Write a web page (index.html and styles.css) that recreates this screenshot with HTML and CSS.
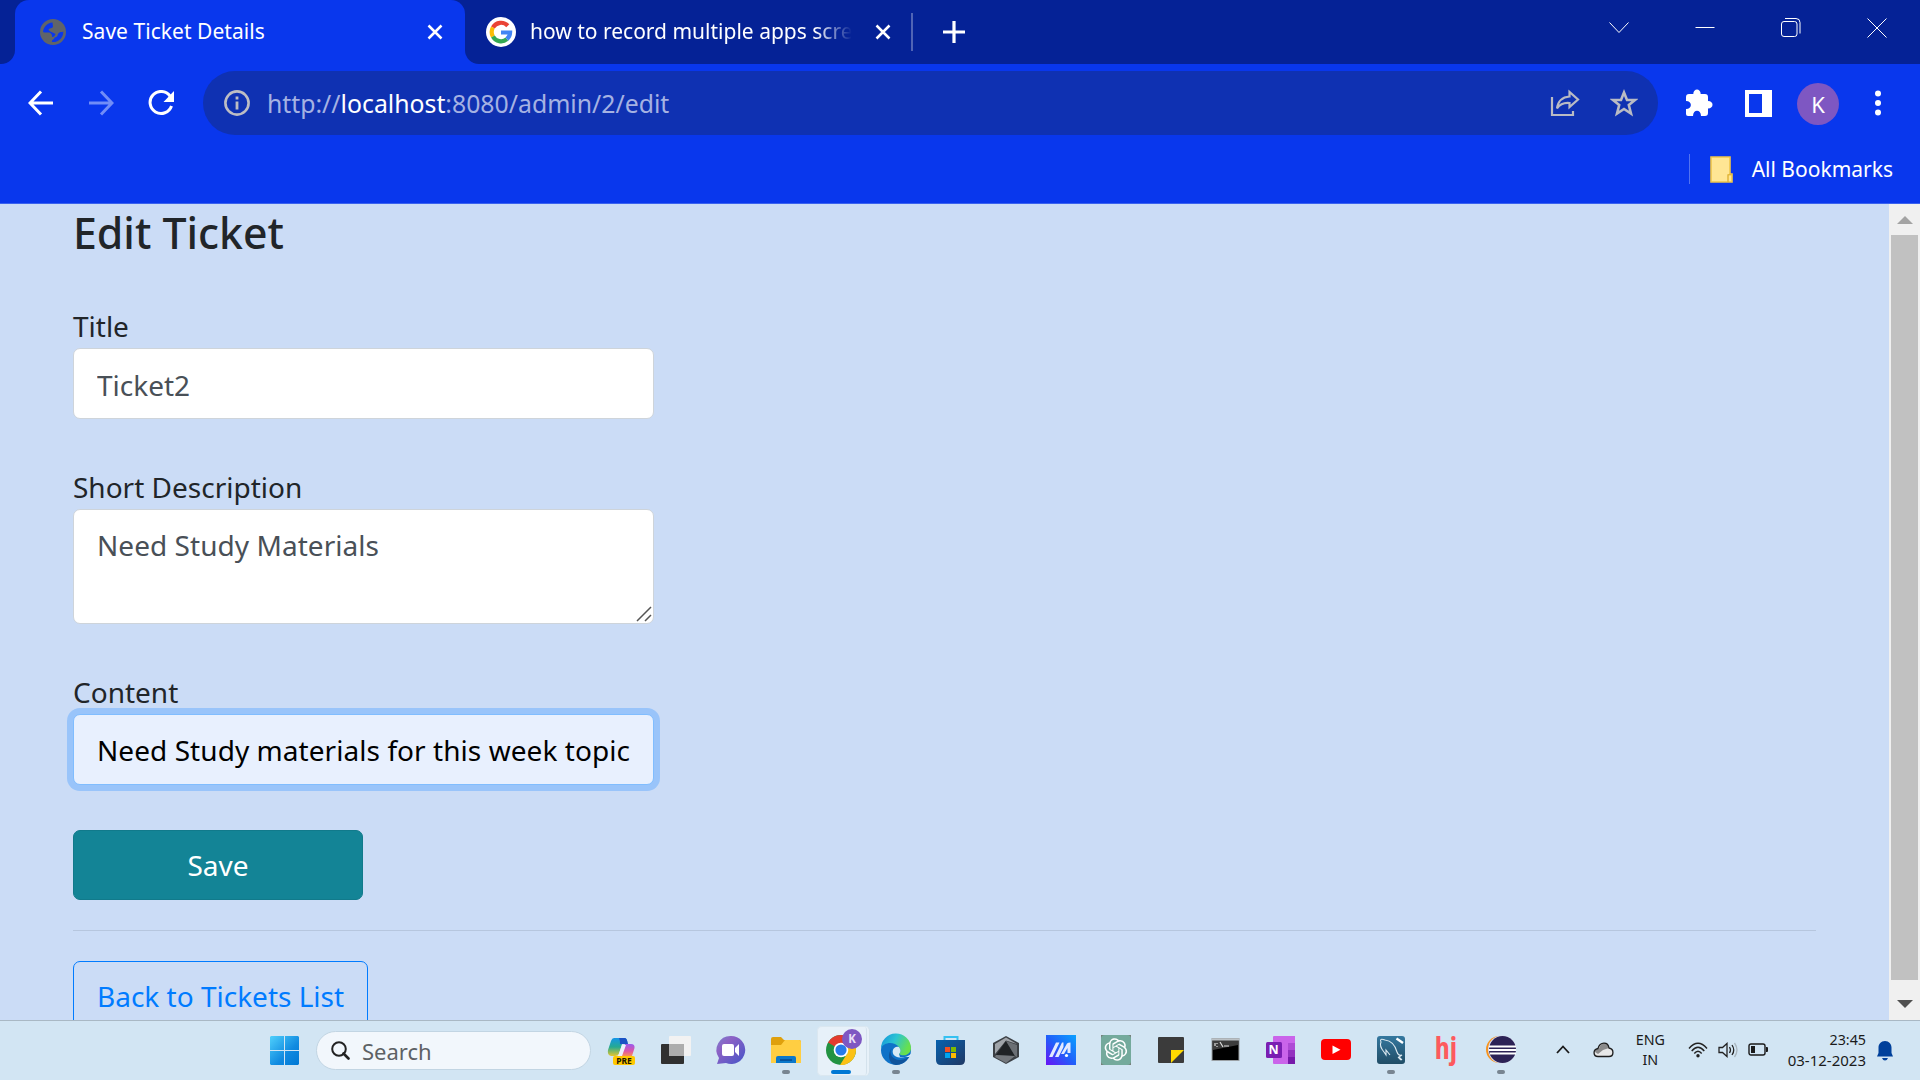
FILE: index.html
```html
<!DOCTYPE html>
<html lang="en">
<head>
<meta charset="utf-8">
<title>Save Ticket Details</title>
<link rel="stylesheet" href="styles.css">
</head>
<body>
<header class="browser">
  <div class="tabstrip">
    <div class="strip-edge"></div>
    <div class="tab">
      <svg class="globe" width="26" height="26" viewBox="0 0 26 26"><circle cx="13" cy="13" r="13" fill="#606469"/><path d="M12.500 3.500C7 4 3 8.500 3 13.500H8.500C11 13.500 12.500 16 12 18C14.500 18 15 16.500 15.500 15C13.500 13.500 10 13 8.500 11C9 8.500 12.500 10 13 7.500Z" fill="#0937ed"/><path d="M12 23C11.500 20.500 14.500 20.500 14.500 18.500C18.500 18.500 17 14.500 19.500 13.500C21 12.500 22 13.500 23.300 12.500C23.500 19 18 23.800 12 23Z" fill="#0937ed"/><path d="M3 12.500L9 18.500V22.500L5 20Z" fill="#606469"/></svg>
      <span class="tab-title">Save Ticket Details</span>
      <svg class="tab-close" width="16" height="16" viewBox="0 0 16 16"><path d="M1.500 1.500l13 13M14.500 1.500l-13 13" stroke="#fff" stroke-width="2.500"/></svg>
    </div>
    <div class="strip">
      <svg class="google" width="30" height="30" viewBox="0 0 30 30"><circle cx="15" cy="15" r="15" fill="#fff"/><g fill="none" stroke-width="4.200"><path d="M21.800 8.700A9.300 9.300 0 0 0 6.900 10.500" stroke="#ea4335"/><path d="M6.900 10.500A9.300 9.300 0 0 0 6.900 19.500" stroke="#fbbc05"/><path d="M6.900 19.500A9.300 9.300 0 0 0 20.900 22.200" stroke="#34a853"/><path d="M20.900 22.200A9.300 9.300 0 0 0 24.100 15.500H15" stroke="#4285f4"/></g></svg>
      <span class="tab-title second">how to record multiple apps screen</span>
      <svg class="second-close" width="16" height="16" viewBox="0 0 16 16"><path d="M1.500 1.500l13 13M14.500 1.500l-13 13" stroke="#fff" stroke-width="2.500"/></svg>
      <i class="tab-sep"></i>
      <svg class="plus" width="24" height="24" viewBox="0 0 24 24"><path d="M12 1v22M1 12h22" stroke="#fff" stroke-width="3.200"/></svg>
      <div class="window-buttons">
        <svg width="20" height="20" viewBox="0 0 20 20"><path d="M.5 4.500L10 14.500L19.500 4.500"/></svg>
        <svg width="20" height="20" viewBox="0 0 20 20"><path d="M.5 9.500h19"/></svg>
        <svg width="20" height="20" viewBox="0 0 20 20"><rect x=".5" y="3.500" width="15.500" height="15" rx="2.500"/><path d="M4 .5h11a4 4 0 0 1 4 4v11"/></svg>
        <svg width="20" height="20" viewBox="0 0 20 20"><path d="M.5.5l19 19M19.500.5l-19 19"/></svg>
      </div>
    </div>
  </div>
  <div class="toolbar">
    <svg class="nav" width="26" height="26" viewBox="0 0 26 26"><path d="M25 13H2.500M13 1.500L2 13L13 24.500"/></svg>
    <svg class="nav dim" width="26" height="26" viewBox="0 0 26 26"><path d="M1 13h22.500M13 1.500L24 13L13 24.500"/></svg>
    <svg class="nav" width="26" height="26" viewBox="0 0 26 26"><path d="M22 6A11 11 0 1 0 23.500 16"/><path d="M26 1v11H15.500Z" fill="#fff" stroke="none"/></svg>
    <div class="omnibox">
      <svg width="26" height="26" viewBox="0 0 26 26"><circle cx="13" cy="13" r="11.600" fill="none" stroke="#bdbdc4" stroke-width="2.600"/><path d="M13 11.500v8M13 6.500v3" stroke="#bdbdc4" stroke-width="2.800"/></svg>
      <span class="url">http://<b>localhost</b>:8080/admin/2/edit</span>
      <svg class="share" width="30" height="28" viewBox="0 0 30 28"><path d="M2 8v18h21v-4M7 19.500C8 12 12 8 19.500 7.500V3L28 10.500L19.500 18V14C14 13.500 10 15 7 19.500Z" fill="none" stroke="#b9bbc4" stroke-width="2.200"/></svg>
      <svg class="star" width="28" height="28" viewBox="0 0 28 28"><path d="M14 3.500L17 11H25L18.800 16L21 24.500L14 20L7 24.500L9.200 16L3 11H11Z" fill="none" stroke="#b9bbc4" stroke-width="2.600"/></svg>
    </div>
    <svg class="puzzle" width="28" height="28" viewBox="0 0 28 28"><path d="M4 5H8.300C8.300-1 15.700-1 15.700 5H20Q23 5 23 8V12C29 12 29 19.500 23 19.500V24Q23 27 20 27H16C16 20 8 20 8 27H3Q1 27 1 25V20C7.500 20 7.500 12 1 12V8Q1 5 4 5Z" fill="#fff"/></svg>
    <svg class="panel" width="27" height="27" viewBox="0 0 27 27"><path d="M0 0h27v27H0zM4 4v19h13V4z" fill="#fff" fill-rule="evenodd"/></svg>
    <span class="avatar">K</span>
    <svg class="dots" width="8" height="26" viewBox="0 0 8 26" fill="#fff"><circle cx="4" cy="3.500" r="3"/><circle cx="4" cy="13" r="3"/><circle cx="4" cy="22.500" r="3"/></svg>
  </div>
  <div class="bookmarks">
    <i class="bm-sep"></i>
    <svg width="23" height="27" viewBox="0 0 23 27"><path d="M1 1h19v17h2v8H1z" fill="#ffe694" stroke="#f0c649" stroke-width="1.600"/><path d="M18 26v-7q2-1 3.500 0" fill="none" stroke="#e2b73a" stroke-width="1.500"/></svg>
    <span>All Bookmarks</span>
  </div>
</header>

<div class="viewport">
  <main class="page">
    <h1 class="heading">Edit Ticket</h1>
    <form class="form">
      <label class="label">Title</label>
      <input class="field" type="text" value="Ticket2">
      <label class="label">Short Description</label>
      <div class="area-wrap">
        <textarea class="field area">Need Study Materials</textarea>
        <svg class="grip" width="16" height="16" viewBox="0 0 16 16"><path d="M1 15L15 1M9 15l6-6" stroke="#555" stroke-width="1.500"/></svg>
      </div>
      <label class="label">Content</label>
      <input class="field active" type="text" value="Need Study materials for this week topic">
      <button class="save" type="button">Save</button>
    </form>
    <hr class="rule">
    <a class="back">Back to Tickets List</a>
  </main>
  <div class="scrollbar">
    <svg width="16" height="8" viewBox="0 0 16 8"><path d="M0 8L8 0L16 8z" fill="#a3a3a3"/></svg>
    <i class="thumb"></i>
    <svg width="16" height="8" viewBox="0 0 16 8"><path d="M0 0h16L8 8z" fill="#505050"/></svg>
  </div>
</div>

<footer class="taskbar">
  <svg class="start" width="29" height="29" viewBox="0 0 29 29"><defs><linearGradient id="win" x1="0" y1="0" x2="1" y2="1"><stop offset="0" stop-color="#4fd0fc"/><stop offset=".6" stop-color="#108ae0"/><stop offset="1" stop-color="#0078d4"/></linearGradient></defs><path d="M1 0h13v14H0V1zM15 0h13l1 1v13H15zM0 15h14v14H1l-1-1zM15 15h14v13l-1 1H15z" fill="url(#win)"/></svg>
  <div class="search">
    <svg width="19" height="19" viewBox="0 0 19 19"><circle cx="8" cy="8" r="6.800" fill="none" stroke="#222" stroke-width="2"/><path d="M12.500 12.500l5 5" stroke="#222" stroke-width="2.600" stroke-linecap="round"/></svg>
    <span>Search</span>
  </div>
  <div class="apps">
    <div class="app"><svg viewBox="0 0 30 30"><defs><linearGradient id="cp1" x1="0" y1="0" x2="0" y2="1"><stop offset="0" stop-color="#1595e8"/><stop offset=".5" stop-color="#25aa91"/><stop offset="1" stop-color="#e6c62d"/></linearGradient><linearGradient id="cp2" x1="0" y1="0" x2="0" y2="1"><stop offset="0" stop-color="#9a5bee"/><stop offset=".6" stop-color="#df55a4"/><stop offset="1" stop-color="#fa9054"/></linearGradient></defs><path d="M8 3h11q2 0 2.500 6H16l-3 10Q12 21 9 21H5q-4-1-3-6L5 6q1-3 3-3z" fill="url(#cp1)"/><path d="M13 3h6q2 0 3 6h-8Q14 5 13 3z" fill="#1b52c4"/><path d="M19 9h6q4 0 3.500 4L26 21H13q2 0 3-3z" fill="url(#cp2)"/><path d="M16 10h4l-4 11h-4z" fill="#edf0fc"/><rect x="7" y="21" width="22" height="9" rx="2" fill="#ffc800"/><text x="18" y="28.500" class="glyph pre">PRE</text></svg></div>
    <div class="app"><svg viewBox="0 0 30 30"><rect x="0" y="9" width="23" height="20" rx="1" fill="#303030"/><rect x="8" y="1" width="22" height="20" rx="1" fill="#f2f2f2"/><path d="M8 9h15v12H8z" fill="#adadad"/></svg></div>
    <div class="app"><svg viewBox="0 0 30 30"><defs><linearGradient id="chat" x1="0" y1="0" x2="1" y2="1"><stop offset="0" stop-color="#7a82ce"/><stop offset=".3" stop-color="#8d62c5"/><stop offset="1" stop-color="#4554c8"/></linearGradient></defs><path d="M15 1a14 14 0 1 1-5 27L1 29l2-6A14 14 0 0 1 15 1z" fill="url(#chat)"/><rect x="6" y="9" width="12" height="12" rx="2" fill="#fff"/><path d="M19 13l4-4v12l-4-4z" fill="#fff"/></svg></div>
    <div class="app running"><svg viewBox="0 0 30 30"><path d="M0 4q0-2 2-2h8l3 3h15q2 0 2 2v5H0z" fill="#dfa00d"/><path d="M0 10h10l4-5h14q2 0 2 2v21H0z" fill="#ffce42"/><path d="M5 28v-5q0-2 2-2h16q2 0 2 2v5z" fill="#0b78ca"/><path d="M9 25h12" stroke="#06498f" stroke-width="1.500"/></svg></div>
    <div class="app running current"><svg viewBox="0 0 30 30" class="over"><circle cx="15" cy="15" r="15" fill="#229342"/><path d="M15 15L2 7.500A15 15 0 0 1 28 7.500z" fill="#e33b2e"/><path d="M15 15h15A15 15 0 0 1 14 30l7.500-12L19 8H29q1 3 1 7z" fill="#fbc116"/><circle cx="15" cy="15" r="7.300" fill="#fff"/><circle cx="15" cy="15" r="5.600" fill="#267bea"/><circle cx="26" cy="4" r="10" fill="#7e57c2"/><text x="26" y="8.300" class="glyph k">K</text></svg></div>
    <div class="app running"><svg viewBox="0 0 30 30"><defs><linearGradient id="edge" x1="0" y1="0" x2="1" y2=".4"><stop offset="0" stop-color="#1290dc"/><stop offset=".5" stop-color="#2bc4d3"/><stop offset="1" stop-color="#68e04c"/></linearGradient></defs><circle cx="15" cy="15" r="15" fill="#0f72c8"/><path d="M0 14A15 15 0 0 1 30 13C30 20 22 22 18 19Q21 16 18 12C13 6 2 7 0 14z" fill="url(#edge)"/><path d="M11 13C6 20 15 30 28 22Q23 30 15 30C7 29 6 18 11 13z" fill="#10549c"/><path d="M18 12c-5-2-9 5-4 9 5 3 13 1 16-2v2l-2 1H19l-1-3q3-3 0-7z" fill="#d7e9f5"/></svg></div>
    <div class="app"><svg viewBox="0 0 30 30"><defs><linearGradient id="store" x1="0" y1="0" x2="1" y2="1"><stop offset="0" stop-color="#0762af"/><stop offset="1" stop-color="#203864"/></linearGradient></defs><path d="M8.500 6V2h13v4" fill="none" stroke="#35c1f1" stroke-width="2"/><path d="M0 5h29v20q0 5-5 5H5q-5 0-5-5z" fill="url(#store)"/><path d="M9 12h5v5H9z" fill="#f25022"/><path d="M15 12h5v5h-5z" fill="#7fba00"/><path d="M9 18h5v5H9z" fill="#00a4ef"/><path d="M15 18h5v5h-5z" fill="#ffb900"/></svg></div>
    <div class="app"><svg viewBox="0 0 30 30"><path d="M15 1l13 7v14l-13 7-13-7V8z" fill="#3c4045"/><path d="M15 2.500l11 6.500L15 5.500 4 19V9z" fill="#a0a4a9"/><path d="M15 6l9 15-19-1z" fill="#202326"/><path d="M15 6l9 15 2 1V10z" fill="#6b6f74"/><path d="M5 20l19 1-9 7-11-6z" fill="#73777c"/></svg></div>
    <div class="app"><svg viewBox="0 0 30 30"><defs><linearGradient id="asus" x1="1" y1="0" x2="0" y2="1"><stop offset="0" stop-color="#0aa2ff"/><stop offset=".5" stop-color="#2060fa"/><stop offset="1" stop-color="#6a12f5"/></linearGradient></defs><path d="M0 0h30v30H0z" fill="url(#asus)"/><path d="M3 22L10 7.500H13.500L6.500 22zM9 22L16 7.500H17.500V12L12.500 22zM15 19L21 8.500Q22 7.500 24.500 7.500V18H21.500V13L18 19z" fill="#e3e9ff"/><circle cx="20.500" cy="20.500" r="1.600" fill="#fff"/></svg></div>
    <div class="app"><svg viewBox="0 0 30 30"><path d="M0 0h30v30H0z" fill="#777f7a"/><rect width="30" height="30" rx="4" fill="#74aa9c"/><path transform="translate(3.600 3.200) scale(.94)" fill="#fff" d="M22.2819 9.8211a5.9847 5.9847 0 0 0-.5157-4.9108 6.0462 6.0462 0 0 0-6.5098-2.9A6.0651 6.0651 0 0 0 4.9807 4.1818a5.9847 5.9847 0 0 0-3.9977 2.9 6.0462 6.0462 0 0 0 .7427 7.0966 5.98 5.98 0 0 0 .511 4.9107 6.051 6.051 0 0 0 6.5146 2.9001A5.9847 5.9847 0 0 0 13.2599 24a6.0557 6.0557 0 0 0 5.7718-4.2058 5.9894 5.9894 0 0 0 3.9977-2.9001 6.0557 6.0557 0 0 0-.7475-7.0729zm-9.022 12.6081a4.4755 4.4755 0 0 1-2.8764-1.0408l.1419-.0804 4.7783-2.7582a.7948.7948 0 0 0 .3927-.6813v-6.7369l2.02 1.1686a.071.071 0 0 1 .038.052v5.5826a4.504 4.504 0 0 1-4.4945 4.4944zm-9.6607-4.1254a4.4708 4.4708 0 0 1-.5346-3.0137l.142.0852 4.783 2.7582a.7712.7712 0 0 0 .7806 0l5.8428-3.3685v2.3324a.0804.0804 0 0 1-.0332.0615L9.74 19.9502a4.4992 4.4992 0 0 1-6.1408-1.6464zM2.3408 7.8956a4.485 4.485 0 0 1 2.3655-1.9728V11.6a.7664.7664 0 0 0 .3879.6765l5.8144 3.3543-2.0201 1.1685a.0757.0757 0 0 1-.071 0l-4.8303-2.7865A4.504 4.504 0 0 1 2.3408 7.872zm16.5963 3.8558L13.1038 8.364 15.1192 7.2a.0757.0757 0 0 1 .071 0l4.8303 2.7913a4.4944 4.4944 0 0 1-.6765 8.1042v-5.6772a.79.79 0 0 0-.407-.667zm2.0107-3.0231l-.142-.0852-4.7735-2.7818a.7759.7759 0 0 0-.7854 0L9.409 9.2297V6.8974a.0662.0662 0 0 1 .0284-.0615l4.8303-2.7866a4.4992 4.4992 0 0 1 6.6802 4.66zM8.3065 12.863l-2.02-1.1638a.0804.0804 0 0 1-.038-.0567V6.0742a4.4992 4.4992 0 0 1 7.3757-3.4537l-.142.0805L8.704 5.459a.7948.7948 0 0 0-.3927.6813zm1.0976-2.3654l2.602-1.4998 2.6069 1.4998v2.9994l-2.5974 1.4997-2.6067-1.4997Z"/></svg></div>
    <div class="app"><svg viewBox="0 0 30 30"><rect x="2" y="2" width="26" height="26" rx="1" fill="#3b3b3b"/><path d="M15 15h13L15 28z" fill="#ffd900"/></svg></div>
    <div class="app"><svg viewBox="0 0 30 30"><rect x="1" y="3.500" width="27" height="22" fill="#000" stroke="#9ba1a5"/><path d="M2 5h25v5L2 15z" fill="#3d3d3d"/><path d="M1 4.500h27" stroke="#bcc2c6" stroke-width="2"/><path d="M4 8v3M6 8v1M6 11v1M9 7l3 5M13 11h5" stroke="#ddd" stroke-width="1.200"/></svg></div>
    <div class="app"><svg viewBox="0 0 30 30"><path d="M8 1h15v28H8q-1 0-1-1V2q0-1 1-1z" fill="#ca64ea"/><path d="M22 1h7v7h-7z" fill="#ca64ea"/><path d="M22 8h7v7h-7z" fill="#ae4bd5"/><path d="M22 15h7v7h-7z" fill="#9332bf"/><path d="M22 22h7v7h-7z" fill="#7719aa"/><rect x="0" y="7" width="16" height="16" rx="1.500" fill="#7a1eb2"/><text x="7.500" y="19.200" class="glyph n">N</text></svg></div>
    <div class="app"><svg viewBox="0 0 30 30"><rect x="0" y="4" width="30" height="21" rx="4" fill="#f00"/><path d="M11.500 10.500l8 4.200-8 4.200z" fill="#fff"/></svg></div>
    <div class="app running"><svg viewBox="0 0 30 30"><defs><linearGradient id="sql" x1="0" y1="0" x2="0" y2="1"><stop offset="0" stop-color="#34789f"/><stop offset="1" stop-color="#214d66"/></linearGradient></defs><rect x="1" y="1" width="28" height="28" rx="3" fill="url(#sql)"/><path d="M8 17Q3 11 5 7Q3 3 9 5Q18 6 21 17Q22 21 26 20L23 22L26 25M8 17l2 3 0-5 4 5M22 22l3 3" fill="none" stroke="#dce9f0" stroke-width="1.100"/><path d="M20.500 3.500l6.500 4.500" stroke="#fff" stroke-width="2.400"/></svg></div>
    <div class="app"><span class="hj">hj</span></div>
    <div class="app running"><svg viewBox="0 0 30 30"><circle cx="13.500" cy="14.500" r="13.500" fill="#f7941e"/><circle cx="16" cy="14.500" r="14" fill="#d9dcef"/><circle cx="16.500" cy="14.500" r="13.500" fill="#2c2255"/><path d="M3 11.500h27M3 15h27M4 18.500h26" stroke="#fff" stroke-width="1.800"/></svg></div>
  </div>
  <div class="tray">
    <svg class="up" width="14" height="9" viewBox="0 0 14 9"><path d="M1 8l6-6.500L13 8" fill="none" stroke="#1a1a1a" stroke-width="1.800"/></svg>
    <svg class="cloud" width="21" height="16" viewBox="0 0 21 16"><path d="M5 14.500C0 14.500-.5 7.500 5 6.500C7-.5 15-.5 16 6C21.500 7 21 14.500 16 14.500z" fill="#e8e8e8"/><path d="M2 10C2 8 4 6.500 6 6.500C8-.5 15-.5 16 6L10 8L5 12z" fill="#8b8b8b"/><path d="M5 14.500C0 14.500-.5 7.500 5 6.500C7-.5 15-.5 16 6C21.500 7 21 14.500 16 14.500z" fill="none" stroke="#1d1d1d" stroke-width="1.300"/></svg>
    <div class="lang"><span>ENG</span><span>IN</span></div>
    <svg class="wifi" width="20" height="16" viewBox="0 0 20 16" fill="none" stroke="#222" stroke-width="1.400"><path d="M1 6.500Q10-4 19 6.500M3.700 9Q10 1.500 16.300 9M6.300 11.500Q10 7 13.700 11.500"/><circle cx="10" cy="13.700" r="1.700" fill="#222" stroke="none"/></svg>
    <svg class="speaker" width="21" height="16" viewBox="0 0 21 16" fill="none" stroke="#222" stroke-width="1.300"><path d="M1 5.500h3.500l4.500-4v13l-4.500-4H1zM11.500 5q2 3 0 6M14 3q3.500 5 0 10"/><path d="M16.500 1q5 7 0 14" stroke="#aab6be"/></svg>
    <svg class="battery" width="21" height="13" viewBox="0 0 21 13"><rect x="1" y="1" width="16" height="11" rx="2" fill="none" stroke="#1a1a1a" stroke-width="1.400"/><path d="M3 3h4v7H3zM18 4h1q1 0 1 1v3q0 1-1 1h-1z" fill="#1a1a1a"/></svg>
    <div class="clock"><span>23:45</span><span class="date">03-12-2023</span></div>
    <svg class="bell" width="16" height="20" viewBox="0 0 16 20"><path d="M8 0c4 0 6.500 3 6.500 6.500V12l1.500 3.500H0L1.500 12V6.500C1.500 3 4 0 8 0zM5 17h6q-1 2.500-3 2.500T5 17z" fill="#00409b"/></svg>
  </div>
</footer>
</body>
</html>
```
FILE: styles.css
```css
* { box-sizing: border-box; }
body {
  margin: 0; width: 1920px; height: 1080px; overflow: hidden;
  display: flex; flex-direction: column;
  font-family: "Noto Sans", "Open Sans", sans-serif; color: #212529;
}
svg { display: block; flex: none; }

/* Browser frame */
.browser { height: 204px; background: #0937ed; border-bottom: 1px solid #3a62ef; color: #fff; flex: none; }
.tabstrip { height: 64px; display: flex; background: linear-gradient(#052296 32px, #0937ed 32px); }
.strip-edge { width: 15px; background: #052296; border-bottom-right-radius: 14px; }
.tab { width: 450px; display: flex; align-items: center; padding: 0 22px 0 25px; background: #0937ed; border-radius: 14px 14px 0 0; }
.tab-title { font-size: 21px; line-height: 30px; white-space: nowrap; letter-spacing: .04px; margin: -2px 0 0 16px; }
.tab-close { margin-left: auto; }
.strip { flex: 1; display: flex; align-items: center; background: #052296; border-bottom-left-radius: 14px; padding-left: 21px; }
.second {
  margin-left: 14px; width: 323px; overflow: hidden; letter-spacing: 0;
  -webkit-mask-image: linear-gradient(90deg, #000 285px, transparent 322px);
  mask-image: linear-gradient(90deg, #000 285px, transparent 322px);
}
.second-close { margin-left: 22px; }
.tab-sep { width: 2px; height: 38px; background: #5064b5; margin-left: 20px; }
.plus { margin-left: 29px; }
.window-buttons { margin: -9px 33px 0 auto; display: flex; gap: 66px; fill: none; stroke: #fff; stroke-width: 1; }

.toolbar { height: 78px; display: flex; align-items: center; padding-left: 28px; }
.nav { fill: none; stroke: #fff; stroke-width: 3; margin-right: 34px; }
.nav.dim { stroke: #718df7; }
.omnibox {
  width: 1455px; height: 64px; margin-left: -5px; padding: 0 20px 0 21px;
  display: flex; align-items: center; border-radius: 32px; background: #0f31b2;
}
.url { margin: -1px 0 0 17px; font-size: 24.800px; line-height: 36px; color: #a5b2e3; }
.url b { font-weight: 400; color: #fff; }
.share { margin-left: auto; }
.star { margin-left: 30px; }
.puzzle { margin-left: 27px; }
.panel { margin-left: 32px; }
.avatar {
  width: 42px; height: 42px; margin: 1px 0 0 25px; border-radius: 50%; background: #7e57c2;
  font-size: 22px; line-height: 42px; text-align: center;
}
.dots { margin-left: 35px; }

.bookmarks { display: flex; align-items: center; justify-content: flex-end; height: 54px; padding-right: 27px; font-size: 21px; line-height: 30px; }
.bm-sep { width: 1px; height: 30px; background: #5273f2; margin-right: 20px; }
.bookmarks span { margin-left: 19px; }

/* Web page */
.viewport { height: 816px; display: flex; background: #cbdcf6; overflow: hidden; flex: none; }
.page { flex: 1; padding: 4px 73px 0; }
.heading { margin: 0; font-size: 42.800px; line-height: 50px; font-weight: 500; }
.form { width: 581px; display: flex; flex-direction: column; margin-top: 47px; }
.label { font-size: 28px; line-height: 42px; margin-bottom: 1px; }
.field {
  display: block; width: 581px; height: 71px; margin: 0 0 47px; padding: 2px 22px 0 23px;
  border: 1px solid #ced4da; border-radius: 7px; background: #fff; outline: none;
  font: 28px/42px "Noto Sans", "Open Sans", sans-serif; color: #495057;
}
.area-wrap { position: relative; margin-bottom: 47px; }
.area { height: 115px; margin: 0; padding: 14px 23px; resize: none; overflow: hidden; letter-spacing: .05px; }
.grip { position: absolute; right: 2px; bottom: 2px; }
.field.active { margin-bottom: 45px; padding-top: 1px; background: #e8f0fe; border-color: #80bdff; color: #000; box-shadow: 0 0 0 6px #99c4fa; letter-spacing: .06px; }
.save {
  width: 290px; height: 70px; padding: 0 0 1px; border: 1px solid #117a8b; border-radius: 7px;
  background: #138496; color: #fff; font: 28px/42px "Noto Sans", "Open Sans", sans-serif;
}
.rule { margin: 30px 0; border: 0; border-top: 1px solid #b6c6de; }
.back {
  display: block; width: 295px; height: 71px; padding: 13px 0 0 23px; white-space: nowrap;
  border: 1px solid #007bff; border-radius: 7px; color: #007bff; font-size: 28px; line-height: 42px;
}
.scrollbar { width: 31px; background: #f0f0f0; display: flex; flex-direction: column; align-items: center; padding: 12px 0; }
.thumb { width: 27px; height: 745px; margin: 11px 0 20px; background: #c1c1c1; }

/* Taskbar */
.taskbar { height: 60px; display: flex; align-items: center; background: #d2e5f3; border-top: 1px solid #a9b8c4; flex: none; }
.start { margin-left: 270px; }
.search {
  width: 275px; height: 39px; margin-left: 17px; padding-left: 14px; border-radius: 20px;
  display: flex; align-items: center; background: #f2f7fc; border: 1px solid #c2d5e3;
  font-size: 22px; line-height: 30px; color: #5d6165;
}
.search span { margin: 0 0 0 12px; }
.apps { display: flex; gap: 25px; margin-left: 15px; }
.app { position: relative; width: 30px; height: 30px; display: flex; justify-content: center; align-items: center; margin-top: -2px; }
.app svg { width: 30px; height: 30px; overflow: visible; }
.running::after { content: ""; position: absolute; left: 11px; top: 35px; width: 8px; height: 4px; border-radius: 2px; background: #788591; }
.current::before { content: ""; position: absolute; left: -9px; top: -9px; width: 48px; height: 48px; border-radius: 5px; background: #e7f1f9; border: 1px solid #dae7f0; border-right: 4px double #d4e2ec; }
.current::after { left: 5px; width: 20px; background: #0078d4; }
.over { position: relative; }
.glyph { font-family: "Noto Sans", sans-serif; font-weight: 700; text-anchor: middle; }
.pre { font-size: 8.500px; fill: #1c1700; }
.k { font-size: 11.500px; fill: #e8def7; }
.n { font-size: 12.500px; fill: #fff; }
.hj { font: 700 30px/30px "Open Sans", sans-serif; font-stretch: 75%; color: #fd5a5d; margin-top: -4px; }
.tray { display: flex; align-items: center; margin-left: auto; padding-right: 27px; }
.cloud { margin-left: 23px; }
.wifi, .speaker, .battery, .cloud, .up { margin-top: -2px; }
.lang, .clock { display: flex; flex-direction: column; font-size: 14.300px; line-height: 20px; color: #1b1b1b; margin-top: -1px; }
.lang { align-items: center; margin-left: 22px; }
.wifi { margin-left: 23px; }
.speaker { margin-left: 10px; }
.battery { margin-left: 9px; }
.clock { align-items: flex-end; width: 80px; margin-left: 17px; white-space: nowrap; }
.date { font-size: 15px; }
.bell { margin-left: 11px; }
```
